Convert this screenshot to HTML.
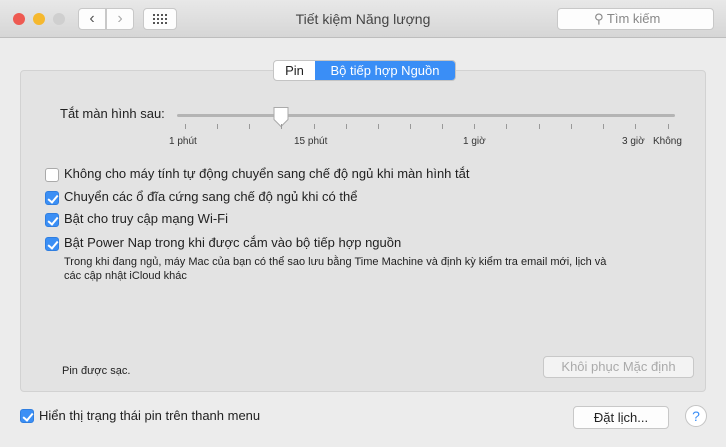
<!DOCTYPE html>
<html><head><meta charset="utf-8"><style>
*{box-sizing:border-box;margin:0;padding:0}
body{width:726px;height:447px;overflow:hidden;background:#ececec;font-family:"Liberation Sans","DejaVu Sans",sans-serif;color:#222;position:relative}
.abs{position:absolute}
.tb{left:0;top:0;width:726px;height:38px;background:linear-gradient(#e8e8e8,#d6d6d6);border-bottom:1px solid #bdbdbd}
.dot{width:12px;height:12px;border-radius:50%;top:13px}
.btn{background:#fdfdfd;border:1px solid #c8c8c8;border-radius:4px}
.panel{left:20px;top:70px;width:686px;height:322px;background:#e3e3e3;border:1px solid #d2d2d2;border-radius:4px}
.cb{width:14px;height:14px;border-radius:3px;left:45px}
.on{background:#3b8ff5;border:1px solid #2f7ee0}
.on::after{content:"";position:absolute;left:4px;top:1px;width:4px;height:8px;border:solid #fff;border-width:0 2px 2px 0;transform:rotate(40deg)}
.off{background:#fff;border:1px solid #aaa}
.lbl{font-size:13px;left:64px}
.tick{width:1px;height:5px;background:#999;top:124px}
.tl{font-size:10px;top:136px;color:#333}
</style></head><body>
<div class="abs tb"></div>
<div class="abs dot" style="left:13px;background:#ee5a52"></div>
<div class="abs dot" style="left:33px;background:#f5b82e"></div>
<div class="abs dot" style="left:53px;background:#cfcfcf"></div>
<div class="abs btn" style="left:78px;top:8px;width:28px;height:22px;border-radius:4px 0 0 4px;font-size:16px;text-align:center;line-height:20px;color:#555">&#8249;</div>
<div class="abs btn" style="left:106px;top:8px;width:28px;height:22px;border-radius:0 4px 4px 0;font-size:16px;text-align:center;line-height:20px;color:#aaa">&#8250;</div>
<div class="abs btn" style="left:143px;top:8px;width:34px;height:22px"></div>
<svg class="abs" style="left:153px;top:14px" width="14" height="10"><g fill="#555"><rect x="0" y="0" width="2" height="2"/><rect x="4" y="0" width="2" height="2"/><rect x="8" y="0" width="2" height="2"/><rect x="12" y="0" width="2" height="2"/><rect x="0" y="4" width="2" height="2"/><rect x="4" y="4" width="2" height="2"/><rect x="8" y="4" width="2" height="2"/><rect x="12" y="4" width="2" height="2"/><rect x="0" y="8" width="2" height="2"/><rect x="4" y="8" width="2" height="2"/><rect x="8" y="8" width="2" height="2"/><rect x="12" y="8" width="2" height="2"/></g></svg>
<div class="abs" style="left:0;width:726px;top:11px;text-align:center;font-size:14px;color:#444">Tiết kiệm Năng lượng</div>
<div class="abs btn" style="left:557px;top:8px;width:157px;height:22px;font-size:13px;color:#888;line-height:20px;padding-left:36px">&#9906; Tìm kiếm</div>
<div class="abs panel"></div>
<div class="abs" style="left:273px;top:60px;height:21px;border:1px solid #c4c4c4;border-radius:4px;overflow:hidden;display:flex;font-size:13px;line-height:19px;background:#fff">
<div style="width:41px;text-align:center">Pin</div>
<div style="width:140px;text-align:center;background:#3a8ef6;color:#fff">Bộ tiếp hợp Nguồn</div></div>
<div class="abs" style="left:60px;top:106px;font-size:13px">Tắt màn hình sau:</div>
<div class="abs" style="left:177px;top:114px;width:498px;height:3px;background:#b4b4b4;border-radius:2px"></div>
<svg class="abs" style="left:272px;top:106px" width="18" height="22"><path d="M2 1.5h14v12l-7 7-7-7z" fill="#fff" stroke="#aaa"/></svg>
<div class="abs tick" style="left:185px"></div><div class="abs tick" style="left:217px"></div><div class="abs tick" style="left:249px"></div><div class="abs tick" style="left:281px"></div><div class="abs tick" style="left:314px"></div><div class="abs tick" style="left:346px"></div><div class="abs tick" style="left:378px"></div><div class="abs tick" style="left:410px"></div><div class="abs tick" style="left:442px"></div><div class="abs tick" style="left:474px"></div><div class="abs tick" style="left:506px"></div><div class="abs tick" style="left:539px"></div><div class="abs tick" style="left:571px"></div><div class="abs tick" style="left:603px"></div><div class="abs tick" style="left:635px"></div><div class="abs tick" style="left:668px"></div>
<div class="abs tl" style="left:169px">1 phút</div>
<div class="abs tl" style="left:294px">15 phút</div>
<div class="abs tl" style="left:463px">1 giờ</div>
<div class="abs tl" style="left:622px">3 giờ</div>
<div class="abs tl" style="left:653px">Không</div>
<div class="abs cb off" style="top:168px"></div><div class="abs lbl" style="top:166px">Không cho máy tính tự động chuyển sang chế độ ngủ khi màn hình tắt</div>
<div class="abs cb on" style="top:191px"></div><div class="abs lbl" style="top:189px">Chuyển các ổ đĩa cứng sang chế độ ngủ khi có thể</div>
<div class="abs cb on" style="top:213px"></div><div class="abs lbl" style="top:211px">Bật cho truy cập mạng Wi-Fi</div>
<div class="abs cb on" style="top:237px"></div><div class="abs lbl" style="top:235px">Bật Power Nap trong khi được cắm vào bộ tiếp hợp nguồn</div>
<div class="abs" style="left:64px;top:255px;font-size:11px;line-height:14px;width:630px">Trong khi đang ngủ, máy Mac của bạn có thể sao lưu bằng Time Machine và định kỳ kiểm tra email mới, lịch và<br>các cập nhật iCloud khác</div>
<div class="abs" style="left:62px;top:365px;font-size:11px">Pin được sạc.</div>
<div class="abs btn" style="left:543px;top:356px;width:151px;height:22px;font-size:13px;color:#aaa;text-align:center;line-height:20px;background:#f3f3f3">Khôi phục Mặc định</div>
<div class="abs cb on" style="left:20px;top:409px"></div><div class="abs lbl" style="left:39px;top:408px">Hiển thị trạng thái pin trên thanh menu</div>
<div class="abs btn" style="left:573px;top:406px;width:96px;height:23px;font-size:13px;text-align:center;line-height:21px">Đặt lịch...</div>
<div class="abs" style="left:685px;top:405px;width:22px;height:22px;border-radius:50%;background:#fff;border:1px solid #c4c4c4;color:#3a8ef6;font-size:14px;text-align:center;line-height:20px">?</div>
</body></html>
